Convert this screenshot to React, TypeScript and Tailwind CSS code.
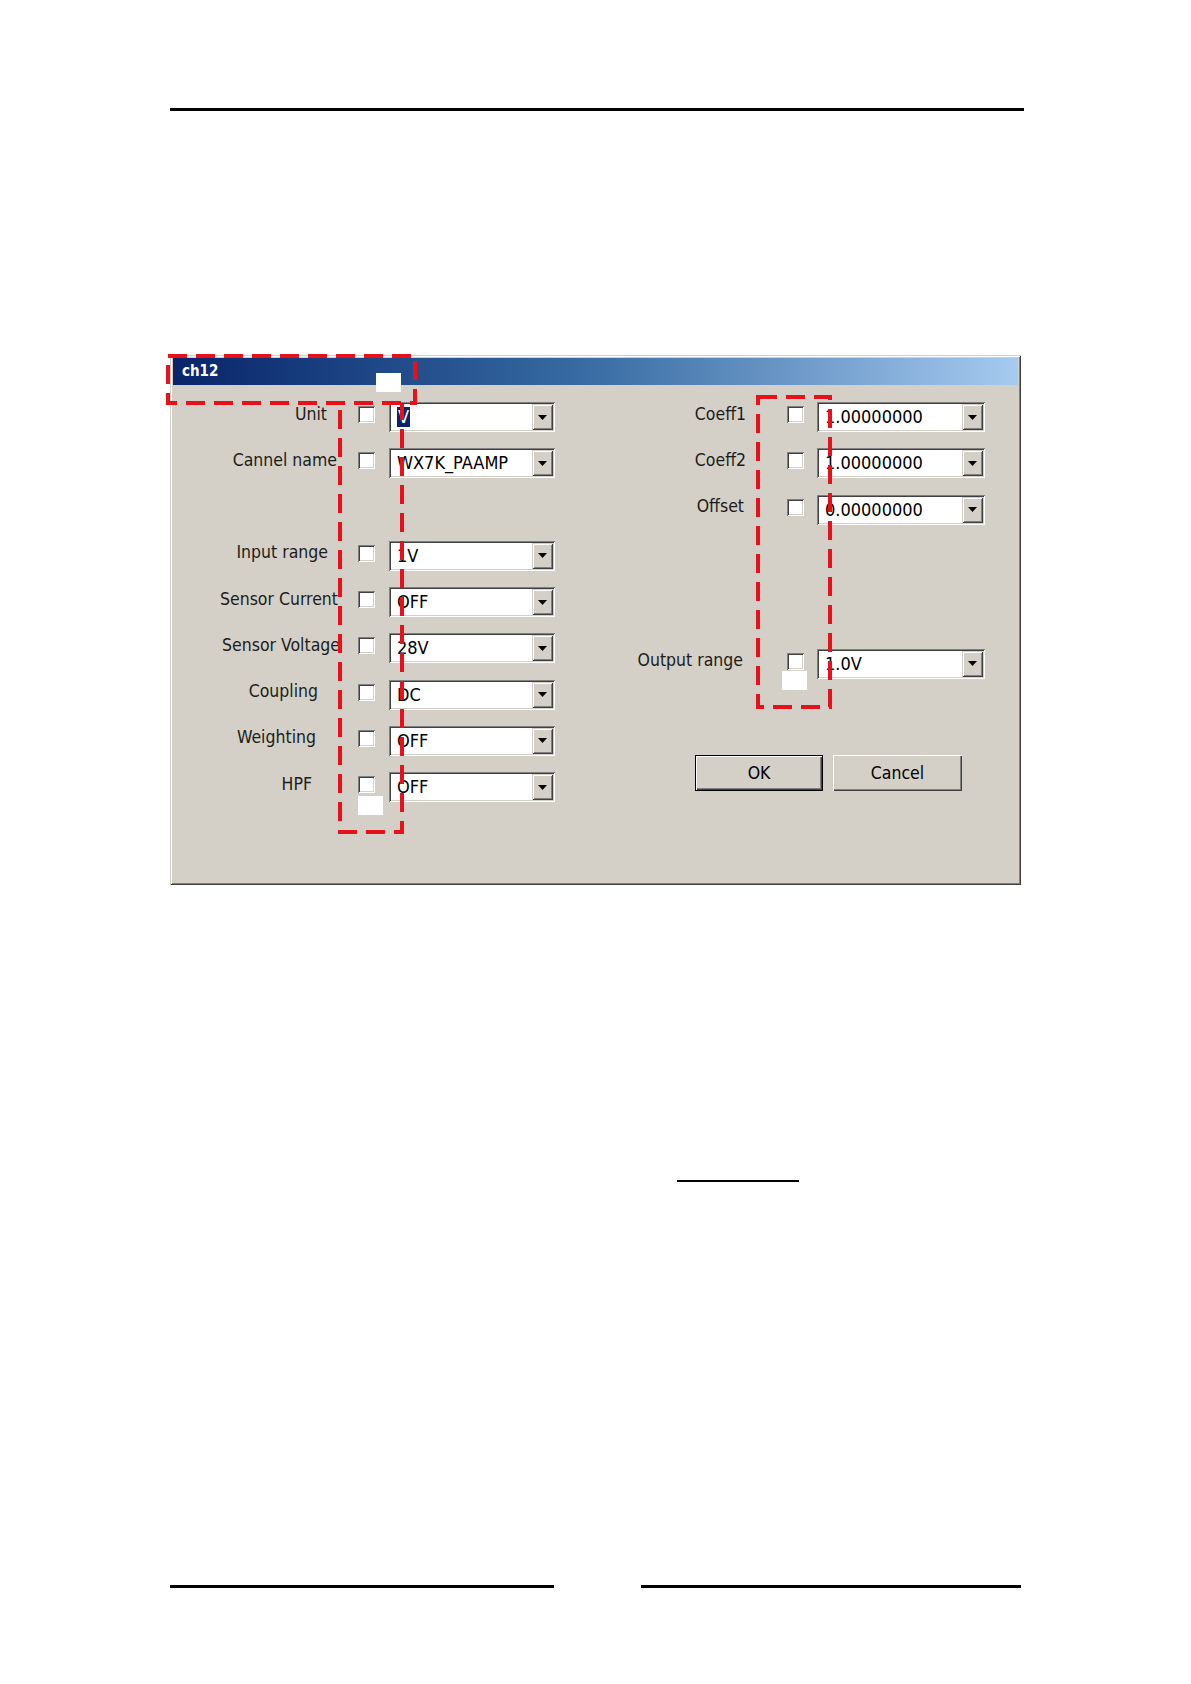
import React from "react";

const UI_FONT = "font-['DejaVu_Sans_Condensed','DejaVu_Sans',sans-serif] [font-stretch:condensed]";

type Field = {
  label: string;
  pad: string;
  value: string;
  selected?: boolean;
};

const leftFields: (Field | null)[] = [
  { label: "Unit", pad: "pr-[13px]", value: "V", selected: true },
  { label: "Cannel name", pad: "pr-[3px]", value: "WX7K_PAAMP" },
  null,
  { label: "Input range", pad: "pr-[12px]", value: "1V" },
  { label: "Sensor Current", pad: "pr-[2px]", value: "OFF" },
  { label: "Sensor Voltage", pad: "pr-0", value: "28V" },
  { label: "Coupling", pad: "pr-[22px]", value: "DC" },
  { label: "Weighting", pad: "pr-[24px]", value: "OFF" },
  { label: "HPF", pad: "pr-[28px]", value: "OFF" },
];

const rightFields: Field[] = [
  { label: "Coeff1", pad: "pr-0", value: "1.00000000" },
  { label: "Coeff2", pad: "pr-0", value: "1.00000000" },
  { label: "Offset", pad: "pr-[2px]", value: "0.00000000" },
];

function CheckBox() {
  return (
    <div className="w-[17px] h-[17px] mb-[5px] bg-white shadow-[inset_1px_1px_0_#808080,inset_-1px_-1px_0_#ffffff,inset_2px_2px_0_#404040,inset_-2px_-2px_0_#d4d0c8]" />
  );
}

function Combo({ value, selected, width }: { value: string; selected?: boolean; width: string }) {
  return (
    <div
      className={`${width} h-[30px] flex p-[2px] bg-white shadow-[inset_1px_1px_0_#808080,inset_-1px_-1px_0_#ffffff,inset_2px_2px_0_#404040,inset_-2px_-2px_0_#d4d0c8]`}
    >
      <div className="flex flex-1 items-center pl-[6px] text-[18px] text-black leading-none">
        {selected ? <span className="bg-[#0a246a] text-white px-[1px] py-[1px]">{value}</span> : value}
      </div>
      <div className="w-[21px] flex items-center justify-center bg-[#d4d0c8] shadow-[inset_1px_1px_0_#d4d0c8,inset_-1px_-1px_0_#404040,inset_2px_2px_0_#ffffff,inset_-2px_-2px_0_#808080]">
        <svg width="9" height="5" viewBox="0 0 9 5">
          <path d="M0 0 H9 L4.5 5 Z" fill="#000" />
        </svg>
      </div>
    </div>
  );
}

function Row({ field, labelWidth, gapA, gapB, comboWidth }: { field: Field; labelWidth: string; gapA: string; gapB: string; comboWidth: string }) {
  return (
    <div className="flex items-center h-[46.25px]">
      <div className={`${labelWidth} ${field.pad} text-right text-[17.5px] text-[#1c1c1c] pb-[7px] whitespace-nowrap`}>{field.label}</div>
      <div className={gapA} />
      <CheckBox />
      <div className={gapB} />
      <Combo value={field.value} selected={field.selected} width={comboWidth} />
    </div>
  );
}

function Win98Button({ children, isDefault }: { children: React.ReactNode; isDefault?: boolean }) {
  return (
    <button
      type="button"
      className={`h-[36px] ${isDefault ? "w-[128px] border border-black" : "w-[129px]"} bg-[#d4d0c8] p-0`}
    >
      <div className="w-full h-full flex items-center justify-center text-[17.5px] text-black shadow-[inset_1px_1px_0_#ffffff,inset_-1px_-1px_0_#404040,inset_-2px_-2px_0_#808080]">
        {children}
      </div>
    </button>
  );
}

function Dialog() {
  return (
    <div className={`${UI_FONT} mt-[244px] w-[851px] h-[530px] p-[3px] bg-[#d4d0c8] shadow-[inset_1px_1px_0_#d4d0c8,inset_-1px_-1px_0_#404040,inset_2px_2px_0_#ffffff,inset_-2px_-2px_0_#808080]`}>
      {/* title bar */}
      <div className="h-[27px] flex items-center pl-[9px] bg-linear-to-r from-[#0a246a] via-[#3a6ea5] to-[#a6caf0]">
        <span className="font-['DejaVu_Sans',sans-serif] font-bold text-[15px] text-white">ch12</span>
      </div>

      <div className="flex pt-[9px]">
        {/* left column */}
        <div className="flex flex-col">
          {leftFields.map((f, i) =>
            f ? (
              <Row key={i} field={f} labelWidth="w-[167px]" gapA="w-[18px]" gapB="w-[14px]" comboWidth="w-[166px]" />
            ) : (
              <div key={i} className="h-[46.25px]" />
            )
          )}
        </div>

        {/* right column */}
        <div className="flex flex-col ml-[45px]">
          {rightFields.map((f) => (
            <Row key={f.label} field={f} labelWidth="w-[146px]" gapA="w-[41px]" gapB="w-[13px]" comboWidth="w-[168px]" />
          ))}
          <div className="h-[108px]" />
          <Row
            field={{ label: "Output range", pad: "pr-[3px]", value: "1.0V" }}
            labelWidth="w-[146px]"
            gapA="w-[41px]"
            gapB="w-[13px]"
            comboWidth="w-[168px]"
          />
          <div className="flex mt-[68px] ml-[95px] gap-[10px]">
            <Win98Button isDefault>OK</Win98Button>
            <Win98Button>Cancel</Win98Button>
          </div>
        </div>
      </div>
    </div>
  );
}

function Annotations() {
  const dash = { stroke: "#e8101a", strokeWidth: 4, strokeDasharray: "19 9", fill: "none" };
  return (
    <svg className="absolute left-0 top-0 pointer-events-none" width="1191" height="1684" viewBox="0 0 1191 1684">
      <rect x="376" y="373" width="25" height="19" fill="#ffffff" />
      <rect x="358" y="796" width="25" height="19" fill="#ffffff" />
      <rect x="782" y="671" width="25" height="19" fill="#ffffff" />
      <path d="M168 356 H415 V403 H168 Z" {...dash} />
      <path d="M340 410 V832 H402 V404" {...dash} />
      <path d="M758 397 H830 V707 H758 Z" {...dash} />
    </svg>
  );
}

export default function App() {
  return (
    <div className="relative w-[1191px] h-[1684px] bg-white">
      <div className="flex flex-col pl-[170px] pt-[108px]">
        <div className="w-[854px] h-[3px] bg-black" />
        <Dialog />
        <div className="ml-[507px] mt-[295px] w-[122px] h-[2px] bg-black" />
        <div className="flex mt-[403px]">
          <div className="w-[384px] h-[3px] bg-black" />
          <div className="ml-[87px] w-[380px] h-[3px] bg-black" />
        </div>
      </div>
      <Annotations />
    </div>
  );
}
